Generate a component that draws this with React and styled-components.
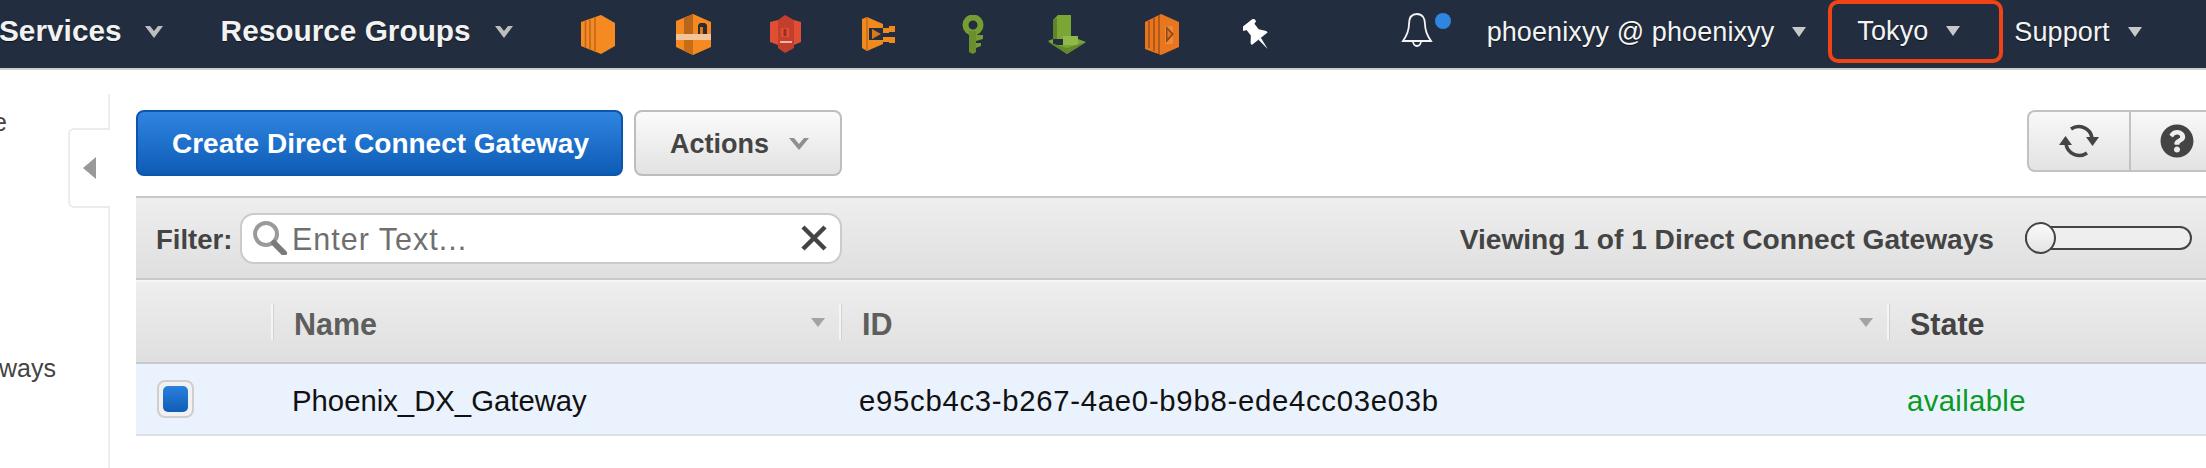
import React from "react";
import styled, { createGlobalStyle } from "styled-components";
import { FaQuestionCircle } from "react-icons/fa";

const Global = createGlobalStyle`
  html, body { margin: 0; padding: 0; background: #fff; }
  body { font-family: "Liberation Sans", Arial, sans-serif; overflow: hidden; }
`;

const Page = styled.div`
  width: 2206px;
  height: 468px;
  overflow: hidden;
  display: flex;
  flex-direction: column;
`;

const Nav = styled.header`
  flex: none;
  height: 68px;
  border-bottom: 2px solid #cfcfcf;
  background: #222e3f;
  display: flex;
  align-items: center;
  color: #f2f2f2;
  white-space: nowrap;
  text-shadow: 0 1px 1px rgba(0, 0, 0, 0.6);
`;

const NavBold = styled.span`
  font-size: 29.8px;
  font-weight: 700;
  margin-left: ${(p) => p.$left}px;
  padding-bottom: 6px;
`;

const NavText = styled.span`
  font-size: 27px;
  letter-spacing: 0.1px;
  color: #f4f4f4;
  margin-left: ${(p) => p.$left || 0}px;
  padding-bottom: 4px;
`;

const Caret = styled.svg`
  flex: none;
  margin-left: ${(p) => p.$left}px;
  margin-bottom: 4px;
`;

const IconSlot = styled.span`
  flex: none;
  display: flex;
  margin-left: ${(p) => p.$left}px;
  filter: blur(0.6px);
`;

const BellSlot = styled.span`
  flex: none;
  display: flex;
  align-items: flex-start;
  margin-left: ${(p) => p.$left}px;
  height: 38px;
  margin-top: -4px;
`;

const BellDot = styled.span`
  width: 16px;
  height: 16px;
  border-radius: 50%;
  background: #2f86e2;
  margin-left: 2px;
`;

const RegionBox = styled.div`
  flex: none;
  box-sizing: border-box;
  width: 175px;
  height: 63px;
  margin: 0 0 5px 22px;
  border: 4px solid #f04416;
  border-radius: 10px;
  display: flex;
  align-items: center;
  padding: 3px 0 0 25px;
`;

const Main = styled.div`
  flex: 1;
  display: flex;
  min-height: 0;
`;

const Sidebar = styled.aside`
  flex: none;
  position: relative;
  box-sizing: border-box;
  width: 110px;
  margin-top: 24px;
  border-right: 2px solid #eeeeee;
`;

const SideLabel = styled.div`
  width: ${(p) => p.$width}px;
  margin-top: ${(p) => p.$top}px;
  height: 30px;
  line-height: 30px;
  overflow: hidden;
  display: flex;
  justify-content: flex-end;
  white-space: nowrap;
  font-size: 25px;
  color: #444;
`;

const Handle = styled.div`
  position: absolute;
  left: 68px;
  top: 34px;
  box-sizing: border-box;
  width: 42px;
  height: 80px;
  background: #fff;
  border: 2px solid #ececec;
  border-right: none;
  border-radius: 6px 0 0 6px;
  display: flex;
  align-items: center;
  padding-left: 13px;
`;

const Arrow = styled.span`
  width: 0;
  height: 0;
  border-top: 11px solid transparent;
  border-bottom: 11px solid transparent;
  border-right: 13px solid #999;
`;

const Content = styled.main`
  flex: 1;
  min-width: 0;
  padding: 40px 0 0 26px;
`;

const Toolbar = styled.div`
  display: flex;
  align-items: flex-start;
  height: 66px;
  margin-bottom: 20px;
`;

const Primary = styled.button`
  box-sizing: border-box;
  width: 487px;
  height: 66px;
  padding: 2px 0 0 2px;
  border: 2px solid #0b55ab;
  border-radius: 8px;
  background: linear-gradient(#2f85e0, #0e5cb6);
  color: #fff;
  font: 700 28px "Liberation Sans", Arial, sans-serif;
`;

const Secondary = styled.button`
  box-sizing: border-box;
  width: 208px;
  height: 66px;
  margin-left: 11px;
  padding: 2px 0 0 3px;
  border: 2px solid #bdbdbd;
  border-radius: 8px;
  background: linear-gradient(#fbfbfb, #e2e2e2);
  color: #444;
  font: 700 27px "Liberation Sans", Arial, sans-serif;
  display: flex;
  align-items: center;
  justify-content: center;
  gap: 20px;
`;

const ToolGroup = styled.div`
  flex: none;
  box-sizing: border-box;
  margin-left: auto;
  width: 179px;
  height: 62px;
  display: flex;
  border: 2px solid #c2c2c2;
  border-right: none;
  border-radius: 8px 0 0 8px;
  background: linear-gradient(#f8f8f8, #e3e3e3);
`;

const ToolButton = styled.div`
  flex: none;
  width: ${(p) => p.$w}px;
  display: flex;
  align-items: center;
  justify-content: center;
  color: #444;
  font-size: 34px;
  border-right: ${(p) => (p.$divide ? "2px solid #c2c2c2" : "none")};
  padding-left: ${(p) => p.$pad || 0}px;
`;

const FilterBar = styled.div`
  box-sizing: border-box;
  height: 84px;
  border-top: 2px solid #c9c9c9;
  border-bottom: 2px solid #c9c9c9;
  background: linear-gradient(#eeeeee, #dfdfdf);
  display: flex;
  align-items: center;
  padding-left: 20px;
`;

const FilterLabel = styled.span`
  font-size: 27.5px;
  font-weight: 700;
  color: #444;
  width: 84px;
  padding-top: 3px;
`;

const FilterInput = styled.div`
  flex: none;
  box-sizing: border-box;
  width: 602px;
  height: 51px;
  border: 2px solid #cbcbcb;
  border-radius: 14px;
  background: #fff;
  display: flex;
  align-items: center;
  padding: 0 12px 0 10px;
`;

const Placeholder = styled.span`
  flex: 1;
  margin-left: 4px;
  padding-top: 3px;
  font-size: 30.5px;
  letter-spacing: 1px;
  color: #6f6f6f;
`;

const Viewing = styled.span`
  margin-left: auto;
  padding-top: 3px;
  font-size: 28.15px;
  font-weight: 700;
  color: #444;
`;

const Toggle = styled.div`
  flex: none;
  position: relative;
  box-sizing: border-box;
  width: 167px;
  height: 24px;
  margin: 0 14px 0 31px;
  border: 2px solid #444;
  border-radius: 12px;
  background: #eee;
`;

const Thumb = styled.span`
  position: absolute;
  left: -2px;
  top: -6px;
  box-sizing: border-box;
  width: 31px;
  height: 32px;
  border: 2px solid #444;
  border-radius: 50%;
  background: linear-gradient(#fafafa, #e4e4e4);
`;

const Grid = styled.div`
  display: grid;
  grid-template-columns: 135px 568px 1048px 1fr;
`;

const HeaderCell = styled.div`
  box-sizing: border-box;
  height: 84px;
  background: linear-gradient(#eeeeee, #dfdfdf);
  border-bottom: 2px solid #c9c9c9;
  border-top: 2px solid #f7f7f7;
  display: flex;
  align-items: center;
  padding: 0 14px 0 21px;
  font-size: 30.5px;
  font-weight: 700;
  color: ${(p) => p.$color || "#5e5e5e"};
`;

const HeaderLabel = styled.span`
  padding-top: 4px;
`;

const HeaderDivider = styled.span`
  flex: none;
  width: 2px;
  height: 36px;
  background: #f5f5f5;
  box-shadow: 1px 0 0 #d2d2d2;
  margin-right: 21px;
  margin-left: -21px;
`;

const SortCaret = styled.span`
  margin-left: auto;
  width: 0;
  height: 0;
  border-left: 7px solid transparent;
  border-right: 7px solid transparent;
  border-top: 9px solid #a3a3a3;
`;

const RowCell = styled.div`
  box-sizing: border-box;
  height: 72px;
  background: #eaf2fd;
  border-bottom: 2px solid #dcdfe3;
  display: flex;
  align-items: center;
  padding-left: ${(p) => p.$pad}px;
  padding-top: ${(p) => p.$top ?? 3}px;
  font-size: 29.3px;
  letter-spacing: ${(p) => p.$track || 0}px;
  color: ${(p) => p.$color || "#111"};
`;

const Check = styled.span`
  box-sizing: border-box;
  width: 37px;
  height: 38px;
  padding: 4px;
  border: 2px solid #cfcfcf;
  border-radius: 8px;
  background: #f1f1f1;
  display: flex;
`;

const CheckFill = styled.span`
  flex: 1;
  border-radius: 5px;
  background: linear-gradient(#2b80dc, #0f5db5);
`;

const NavCaret = ({ left }) => (
  <Caret $left={left} width="14" height="10" viewBox="0 0 14 10">
    <path d="M0 0h14L7 10z" fill="#c8c8c8" />
  </Caret>
);

const NotchCaret = ({ left }) => (
  <Caret $left={left} width="18" height="12" viewBox="0 0 18 12">
    <path d="M0 0l5 0 4 5 4-5h5L9 12z" fill="#bdbdbd" />
  </Caret>
);

const Ec2 = () => (
  <svg width="34" height="39" viewBox="0 0 34 39">
    <path d="M0 7l20-7 14 8v23l-14 8-20-8z" fill="#f68a22" />
    <path d="M4.5 6v27M9 5v30" stroke="#b9651c" strokeWidth="1.5" />
    <path d="M14 2.5v34" stroke="#c9701a" strokeWidth="2" />
  </svg>
);

const Lightsail = () => (
  <svg width="35" height="41" viewBox="0 0 35 41">
    <path d="M0 7l17-7 18 8v12H0z" fill="#f68a22" />
    <path d="M8 4l9-4v20H8z" fill="#b9661b" />
    <path d="M22 20v-9l2-2h5l2 2v9z" fill="#2d2c30" />
    <path d="M24 20v-7h3v7z" fill="#d77c20" />
    <path d="M0 26h35v7l-18 8-17-8z" fill="#f68a22" />
    <path d="M17 26v15l-9-4v-11z" fill="#c96c16" />
    <rect y="20" width="35" height="6" fill="#f3c49a" />
  </svg>
);

const S3 = () => (
  <svg width="31" height="38" viewBox="0 0 31 38">
    <path d="M0 7l8-2v25l-8-3zM31 7l-7-2v25l7-3z" fill="#e04e36" />
    <path d="M8 5l7-5 9 5v28l-9 5-7-5z" fill="#c43f2b" />
    <rect x="11" y="13" width="8" height="9" fill="#e04e36" />
    <rect x="13.5" y="14" width="3" height="7" fill="#9a2e20" />
    <rect x="10" y="26" width="12" height="2" fill="#f0b6a8" />
  </svg>
);

const Gateway = () => (
  <svg width="33" height="34" viewBox="0 0 33 34">
    <path d="M0 2l5-2 16 7v4H7v12h14v4l-16 7-5-3z" fill="#f18a1e" />
    <path d="M5 0v34" stroke="#c4691a" strokeWidth="1.5" />
    <path d="M10 12l9 5-9 5z" fill="#d9771a" />
    <rect x="21" y="11" width="6" height="5" fill="#f18a1e" />
    <rect x="21" y="20" width="6" height="5" fill="#f18a1e" />
    <rect x="27" y="9" width="6" height="6" fill="#f18a1e" />
    <rect x="27" y="20" width="6" height="6" fill="#f18a1e" />
  </svg>
);

const KeyIcon = () => (
  <svg width="24" height="39" viewBox="0 0 24 39">
    <circle cx="12" cy="10" r="7.5" fill="none" stroke="#769d32" strokeWidth="6" />
    <path d="M8 16h7v21l-3 2-4-2z" fill="#6c8f2d" />
    <path d="M15 20h7v4l-7 2zM15 28h5v3l-5 2z" fill="#769d32" />
  </svg>
);

const Cloudwatch = () => (
  <svg width="38" height="39" viewBox="0 0 38 39">
    <path d="M5 5l5-5h13v24H5z" fill="#7aa636" />
    <path d="M5 5l4-2v21H5z" fill="#5f842b" />
    <rect x="15" y="21" width="15" height="9" fill="#8fb94a" />
    <path d="M0 26l5-2v6h25v-6l8 3-19 12z" fill="#7aa636" />
    <path d="M0 27l19 6 19-6-19 12z" fill="#628a2c" />
  </svg>
);

const Lambda = () => (
  <svg width="34" height="41" viewBox="0 0 34 41">
    <path d="M0 8l16-8 18 8v25l-18 8-16-6z" fill="#e8761e" />
    <path d="M4 7v27M9 4v33M14 1v39" stroke="#a5531a" strokeWidth="1.6" />
    <path d="M20 12h8v18h-8z" fill="#f08a38" />
    <path d="M21 12l8 8-8 9z" fill="#8d4a1c" />
    <path d="M22.5 16l4 4-4 4.5z" fill="#e8761e" />
  </svg>
);

const Pin = () => (
  <svg width="26" height="30" viewBox="0 0 26 30">
    <g transform="rotate(-38 13 15)" fill="#fff">
      <path d="M5 1h16v4l-3 1v7l5 6v2H3v-2l5-6V6L5 5z" />
      <path d="M11.5 21h3L13 34z" />
    </g>
  </svg>
);

const Bell = () => (
  <svg width="32" height="34" viewBox="0 0 32 34" fill="none" stroke="#f4f4f4" strokeWidth="1.8">
    <path d="M16 1c-6 0-8 5-8 10 0 6-1 10-6 17h28c-5-7-6-11-6-17 0-5-2-10-8-10z" />
    <path d="M12 28c0 3 2 5 4 5s4-2 4-5" />
  </svg>
);

const Magnifier = () => (
  <svg width="36" height="34" viewBox="0 0 36 34" fill="none">
    <circle cx="14" cy="13" r="11" stroke="#9a9a9a" strokeWidth="4" />
    <path d="M22 22l10 10" stroke="#7a7a7a" strokeWidth="6" strokeLinecap="round" />
  </svg>
);

const Clear = () => (
  <svg width="28" height="26" viewBox="0 0 28 26" fill="none">
    <path d="M3 2l22 22M25 2L3 24" stroke="#444" strokeWidth="4.5" />
  </svg>
);

const Refresh = () => (
  <svg width="42" height="38" viewBox="0 0 42 38" fill="none">
    <path d="M13 7A13.5 13.5 0 0 1 34 16" stroke="#444" strokeWidth="3.6" />
    <path d="M29 31A13.5 13.5 0 0 1 8 22" stroke="#444" strokeWidth="3.6" />
    <path d="M28 15h13l-6.5 9z" fill="#444" />
    <path d="M1 23h13L7.5 14z" fill="#444" />
  </svg>
);

const Chevron = () => (
  <svg width="20" height="12" viewBox="0 0 20 12">
    <path d="M0 0h5l5 6 5-6h5L10 12z" fill="#8f8f8f" />
  </svg>
);

export default function App() {
  return (
    <Page>
      <Global />
      <Nav>
        <NavBold $left={-1}>Services</NavBold>
        <NotchCaret left={23} />
        <NavBold $left={58}>Resource Groups</NavBold>
        <NotchCaret left={24} />
        <IconSlot $left={68}><Ec2 /></IconSlot>
        <IconSlot $left={61}><Lightsail /></IconSlot>
        <IconSlot $left={59}><S3 /></IconSlot>
        <IconSlot $left={61}><Gateway /></IconSlot>
        <IconSlot $left={66}><KeyIcon /></IconSlot>
        <IconSlot $left={63}><Cloudwatch /></IconSlot>
        <IconSlot $left={59}><Lambda /></IconSlot>
        <IconSlot $left={64}><Pin /></IconSlot>
        <BellSlot $left={132}>
          <Bell />
          <BellDot />
        </BellSlot>
        <NavText $left={36}>phoenixyy @ phoenixyy</NavText>
        <NavCaret left={18} />
        <RegionBox>
          <NavText>Tokyo</NavText>
          <NavCaret left={18} />
        </RegionBox>
        <NavText $left={11}>Support</NavText>
        <NavCaret left={18} />
      </Nav>
      <Main>
        <Sidebar>
          <SideLabel $width={7} $top={13}>Home</SideLabel>
          <SideLabel $width={56} $top={216}>Direct Connect Gateways</SideLabel>
          <Handle><Arrow /></Handle>
        </Sidebar>
        <Content>
          <Toolbar>
            <Primary>Create Direct Connect Gateway</Primary>
            <Secondary>Actions <Chevron /></Secondary>
            <ToolGroup>
              <ToolButton $w={100} $divide><Refresh /></ToolButton>
              <ToolButton $w={77} $pad={7}><FaQuestionCircle /></ToolButton>
            </ToolGroup>
          </Toolbar>
          <FilterBar>
            <FilterLabel>Filter:</FilterLabel>
            <FilterInput>
              <Magnifier />
              <Placeholder>Enter Text...</Placeholder>
              <Clear />
            </FilterInput>
            <Viewing>Viewing 1 of 1 Direct Connect Gateways</Viewing>
            <Toggle><Thumb /></Toggle>
          </FilterBar>
          <Grid>
            <HeaderCell />
            <HeaderCell><HeaderDivider /><HeaderLabel>Name</HeaderLabel><SortCaret /></HeaderCell>
            <HeaderCell><HeaderDivider /><HeaderLabel>ID</HeaderLabel><SortCaret /></HeaderCell>
            <HeaderCell $color="#444"><HeaderDivider /><HeaderLabel>State</HeaderLabel></HeaderCell>
            <RowCell $pad={21} $top={0}><Check><CheckFill /></Check></RowCell>
            <RowCell $pad={21}>Phoenix_DX_Gateway</RowCell>
            <RowCell $pad={20} $track={0.72}>e95cb4c3-b267-4ae0-b9b8-ede4cc03e03b</RowCell>
            <RowCell $pad={20} $track={0.35} $color="#0a9a24">available</RowCell>
          </Grid>
        </Content>
      </Main>
    </Page>
  );
}
